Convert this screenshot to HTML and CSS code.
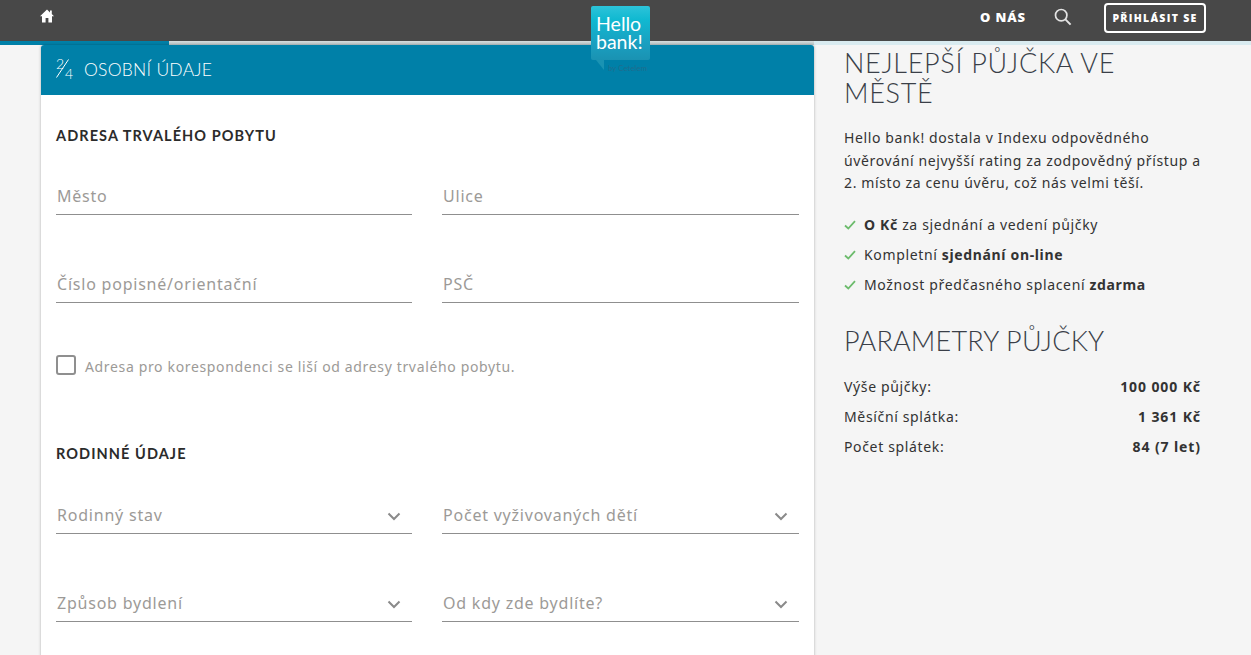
FILE: index.html
```html
<!DOCTYPE html>
<html lang="cs">
<head>
<meta charset="utf-8">
<title>Hello bank!</title>
<link rel="stylesheet" href="styles.css">
</head>
<body>
<header class="topbar">
  <svg class="home" viewBox="0 0 14 14" width="14" height="14"><path fill="#fff" d="M7 .6 0 7.2h2V13.600h3.600V9h2.800v4.600H12V7.200h2L11.800 5.100V1.400H10v2z"/></svg>
  <nav class="topnav">
    <span class="about">O NÁS</span>
    <svg class="search" viewBox="0 0 18 18" width="18" height="18"><circle cx="7.200" cy="7.200" r="5.700" fill="none" stroke="#e4e4e4" stroke-width="1.700"/><path d="M11.400 11.400 16.600 16.600" stroke="#e4e4e4" stroke-width="2" fill="none"/></svg>
    <span class="login">PŘIHLÁSIT SE</span>
  </nav>
</header>
<div class="progress"><div class="progress-fill"></div><div class="progress-rest"></div><div class="progress-side"></div></div>
<div class="logo">
  <div class="bubble"><span>Hello</span><span>bank!</span></div>
  <svg class="tail" viewBox="0 0 8 10" width="8" height="10"><path fill="#1a93b3" d="M0 0H8V10z"/></svg>
  <span class="cetelem">by Cetelem</span>
</div>
<main class="page">
  <section class="card">
    <div class="card-head"><span class="step"><span class="num-top">2</span><span class="num-bottom">4</span><svg class="slash" viewBox="0 0 13 19" width="13" height="19"><path d="M.5 18.500 12.500.5" stroke="#fff" stroke-width="1" fill="none"/></svg></span><span>OSOBNÍ ÚDAJE</span></div>
    <div class="card-body">
      <h3 class="section-title">ADRESA TRVALÉHO POBYTU</h3>
      <div class="fields">
        <div class="field">Město</div>
        <div class="field">Ulice</div>
        <div class="field">Číslo popisné/orientační</div>
        <div class="field">PSČ</div>
      </div>
      <label class="check"><span class="box"></span><span>Adresa pro korespondenci se liší od adresy trvalého pobytu.</span></label>
      <h3 class="section-title family">RODINNÉ ÚDAJE</h3>
      <div class="fields selects">
        <div class="field"><span>Rodinný stav</span><svg class="chev" viewBox="0 0 14 9" width="14" height="9"><path d="M1.500 1.500 7 7l5.500-5.500" fill="none" stroke="#8a8a8a" stroke-width="2"/></svg></div>
        <div class="field"><span>Počet vyživovaných dětí</span><svg class="chev" viewBox="0 0 14 9" width="14" height="9"><path d="M1.500 1.500 7 7l5.500-5.500" fill="none" stroke="#8a8a8a" stroke-width="2"/></svg></div>
        <div class="field"><span>Způsob bydlení</span><svg class="chev" viewBox="0 0 14 9" width="14" height="9"><path d="M1.500 1.500 7 7l5.500-5.500" fill="none" stroke="#8a8a8a" stroke-width="2"/></svg></div>
        <div class="field"><span>Od kdy zde bydlíte?</span><svg class="chev" viewBox="0 0 14 9" width="14" height="9"><path d="M1.500 1.500 7 7l5.500-5.500" fill="none" stroke="#8a8a8a" stroke-width="2"/></svg></div>
      </div>
    </div>
  </section>
  <aside class="side">
    <h2 class="side-title">NEJLEPŠÍ PŮJČKA VE MĚSTĚ</h2>
    <p class="intro">Hello bank! dostala v Indexu odpovědného úvěrování nejvyšší rating za zodpovědný přístup a 2. místo za cenu úvěru, což nás velmi těší.</p>
    <ul class="benefits">
      <li><svg viewBox="0 0 12 10" width="12" height="10"><path d="M1 5.500 4.300 8.500 11 1.200" fill="none" stroke="#6cbb6c" stroke-width="1.800"/></svg><span><b>O Kč</b> za sjednání a vedení půjčky</span></li>
      <li><svg viewBox="0 0 12 10" width="12" height="10"><path d="M1 5.500 4.300 8.500 11 1.200" fill="none" stroke="#6cbb6c" stroke-width="1.800"/></svg><span>Kompletní <b>sjednání on-line</b></span></li>
      <li><svg viewBox="0 0 12 10" width="12" height="10"><path d="M1 5.500 4.300 8.500 11 1.200" fill="none" stroke="#6cbb6c" stroke-width="1.800"/></svg><span>Možnost předčasného splacení <b>zdarma</b></span></li>
    </ul>
    <h2 class="side-title params">PARAMETRY PŮJČKY</h2>
    <dl class="rows">
      <div class="row"><dt>Výše půjčky:</dt><dd>100 000 Kč</dd></div>
      <div class="row"><dt>Měsíční splátka:</dt><dd>1 361 Kč</dd></div>
      <div class="row"><dt>Počet splátek:</dt><dd>84 (7 let)</dd></div>
    </dl>
  </aside>
</main>
</body>
</html>
```
FILE: styles.css
```css
* { box-sizing: border-box; }
html, body { margin: 0; height: 655px; overflow: hidden; }
body { background: #f5f5f5; font-family: "Noto Sans", "Open Sans", sans-serif; color: #333; }

.topbar { height: 41px; background: #484848; display: flex; align-items: flex-start; justify-content: space-between; padding: 0 45px 0 40px; }
.home { margin-top: 9px; }
.topnav { display: flex; align-items: center; height: 33px; }
.about { color: #fff; font: 800 13px "Open Sans", sans-serif; letter-spacing: .9px; margin-right: 28px; }
.search { margin-right: 32px; }
.login { width: 102px; height: 30px; margin-top: 2px; border: 2px solid #fff; border-radius: 4px; color: #fff; font: 800 10.500px "Open Sans", sans-serif; letter-spacing: 1.300px; display: flex; align-items: center; justify-content: center; white-space: nowrap; }

.progress { display: flex; height: 4px; }
.progress-fill { width: 169px; background: #0080a8; }
.progress-rest { width: 645px; background: linear-gradient(#d6dcdc, #b9c6c8); }
.progress-side { flex: 1; background: #d9ebf0; }

.logo { position: absolute; left: 591px; top: 6px; width: 59px; }
.bubble { height: 54px; border-radius: 2px; background: linear-gradient(#2dc3d9 0, #10b9d1 25%, #1a9fc0 70%, #1a92b2 100%); color: #fff; font: 400 19.500px/18px "Lato", sans-serif; padding: 9px 0 0 5px; display: flex; flex-direction: column; }
.tail { display: block; margin-left: 5px; }
.cetelem { position: absolute; left: 17px; top: 58px; font: 7.500px/9px "Lato", sans-serif; color: #1f6d8e; white-space: nowrap; letter-spacing: .2px; }

.page { display: flex; align-items: flex-start; padding-left: 41px; }
.card { width: 773px; height: 640px; background: #fff; border-radius: 3px 3px 0 0; box-shadow: 0 0 3px rgba(0,0,0,.3); flex: none; }
.card-head { height: 50px; background: #0080a8; border-radius: 3px 3px 0 0; color: #fff; display: flex; align-items: center; gap: 9px; padding: 0 0 2px 15px; font: 300 17.500px "Lato", sans-serif; letter-spacing: .25px; }
.step { position: relative; display: grid; grid-template-columns: 9px 10px; grid-template-rows: 10px 10px; width: 19px; height: 20px; font-size: 14px; line-height: 10px; letter-spacing: 0; }
.num-top { grid-column: 1; grid-row: 1; }
.num-bottom { grid-column: 2; grid-row: 2; }
.slash { position: absolute; left: 0; top: 0; }
.card-body { padding: 32px 15px 0; }
.section-title { margin: 0; font: 700 14.500px/18px "Lato", sans-serif; letter-spacing: 1.080px; color: #2b2b2b; }
.family { margin-top: 70px; }
.fields { display: grid; grid-template-columns: 356px 357px; column-gap: 30px; row-gap: 50px; margin-top: 32px; }
.selects { margin-top: 33px; }
.field { height: 38px; border-bottom: 1px solid #8f8f8f; color: #9c9a97; font-size: 16px; line-height: 24px; padding: 7px 1px 0; display: flex; justify-content: space-between; align-items: flex-start; letter-spacing: .78px; }
.chev { margin: 9px 10px 0 0; flex: none; }
.check { display: flex; align-items: flex-start; gap: 9px; margin-top: 52px; color: #9c9a97; font-size: 14px; line-height: 24px; letter-spacing: .65px; height: 20px; }
.box { width: 20px; height: 20px; border: 2px solid #8f8f8f; border-radius: 3px; flex: none; }

.side { width: 356px; margin-left: 30px; padding-top: 3px; }
.side-title { margin: 0; font: 300 27px/30px "Lato", sans-serif; letter-spacing: .7px; color: #3a3f48; }
.intro { margin: 19px -6px 0 0; font-size: 14px; line-height: 22.500px; letter-spacing: .62px; color: #333; }
.benefits { list-style: none; margin: 15px 0 0; padding: 0; font-size: 14px; letter-spacing: .65px; }
.benefits li { display: flex; align-items: center; gap: 8px; height: 30px; }
.benefits b { font-weight: 700; }
.params { margin-top: 26px; letter-spacing: .2px; }
.rows { margin: 16px 0 0; font-size: 14px; letter-spacing: .65px; }
.row { display: flex; justify-content: space-between; height: 30px; line-height: 30px; }
.row dd { margin: 0 -1px 0 0; font-weight: 700; letter-spacing: .9px; }
```
